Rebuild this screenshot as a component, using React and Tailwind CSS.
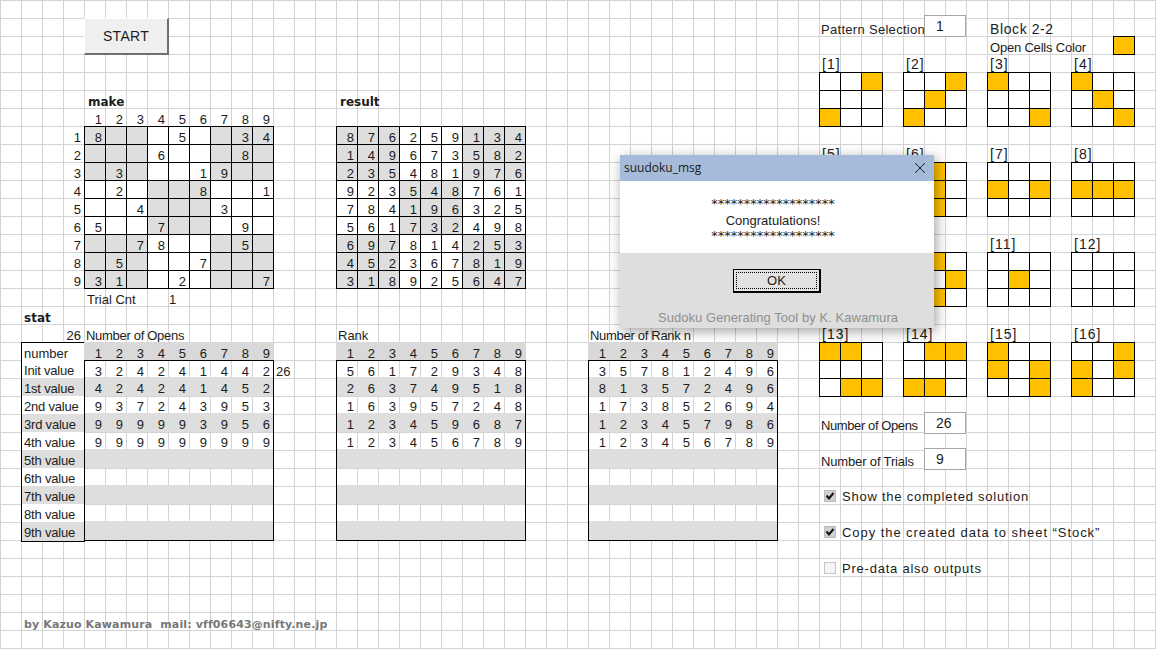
const ORANGE = 'bg-[#ffc000]';

const makeRows = [
  '8   5  34',
  '   6   8 ',
  ' 3   19  ',
  ' 2   8  1',
  '  4   3  ',
  '5  7   9 ',
  '  78   5 ',
  ' 5   7   ',
  '31  2   7',
];
const resultRows = ['876259134', '149673582', '235481976', '923548761', '784196325', '561732498', '697814253', '452367819', '318925647'];

const statLabels = ['Init value', '1st value', '2nd value', '3rd value', '4th value', '5th value', '6th value', '7th value', '8th value', '9th value'];
const statOpens = ['324241442', '424241452', '937243953', '999993956', '999999999'];
const statRank = ['561729348', '263749518', '163957248', '123459687', '123456789'];
const statCount = ['357812496', '813572496', '173852694', '123457986', '123456789'];

const patterns = [
  { n: 1, col: 'col-start-40', label: 'row-start-4', grid: 'row-start-5', on: [2, 6] },
  { n: 2, col: 'col-start-44', label: 'row-start-4', grid: 'row-start-5', on: [2, 4, 6] },
  { n: 3, col: 'col-start-48', label: 'row-start-4', grid: 'row-start-5', on: [0, 8] },
  { n: 4, col: 'col-start-52', label: 'row-start-4', grid: 'row-start-5', on: [0, 4, 8] },
  { n: 5, col: 'col-start-40', label: 'row-start-9', grid: 'row-start-10', on: [1, 7] },
  { n: 6, col: 'col-start-44', label: 'row-start-9', grid: 'row-start-10', on: [1, 4, 7] },
  { n: 7, col: 'col-start-48', label: 'row-start-9', grid: 'row-start-10', on: [3, 5] },
  { n: 8, col: 'col-start-52', label: 'row-start-9', grid: 'row-start-10', on: [3, 4, 5] },
  { n: 9, col: 'col-start-40', label: 'row-start-14', grid: 'row-start-15', on: [1, 3, 7] },
  { n: 10, col: 'col-start-44', label: 'row-start-14', grid: 'row-start-15', on: [1, 5, 7] },
  { n: 11, col: 'col-start-48', label: 'row-start-14', grid: 'row-start-15', on: [4] },
  { n: 12, col: 'col-start-52', label: 'row-start-14', grid: 'row-start-15', on: [] },
  { n: 13, col: 'col-start-40', label: 'row-start-19', grid: 'row-start-20', on: [0, 1, 7, 8] },
  { n: 14, col: 'col-start-44', label: 'row-start-19', grid: 'row-start-20', on: [1, 2, 6, 7] },
  { n: 15, col: 'col-start-48', label: 'row-start-19', grid: 'row-start-20', on: [0, 3, 5, 8] },
  { n: 16, col: 'col-start-52', label: 'row-start-19', grid: 'row-start-20', on: [2, 3, 5, 6] },
];

function isShaded(r, c) {
  const br = Math.floor(r / 3);
  const bc = Math.floor(c / 3);
  return (br + bc) % 2 === 0;
}

function Digit({ children }) {
  return <div className="w-[21px] h-[18px] shrink-0 pr-[3px] pt-[3px] text-right leading-[18px]">{children}</div>;
}

function Digits({ value }) {
  return (
    <div className="flex w-[189px]">
      {[...value].map((d, i) => <Digit key={i}>{d === ' ' ? '' : d}</Digit>)}
    </div>
  );
}

function SudokuBoard({ rows, className }) {
  return (
    <div className={`${className} w-fit h-fit grid grid-cols-[repeat(9,21px)] border-r border-b border-black`}>
      {rows.flatMap((row, r) => [...row].map((d, c) => (
        <div key={`${r}-${c}`} className={`h-[18px] pr-[3px] pt-[2px] text-right leading-[18px] border-l border-t border-black ${isShaded(r, c) ? 'bg-[#dedede]' : 'bg-white'}`}>
          {d === ' ' ? '' : d}
        </div>
      )))}
    </div>
  );
}

function StatBody({ rows, className = '' }) {
  return (
    <div className={`${className} w-fit h-fit`}>
      <div className="bg-[#d9d9d9] w-[189px]"><Digits value="123456789" /></div>
      <div className="w-[190px] h-[181px] border border-black">
        {statLabels.map((_, i) => (
          <div key={i} className={`${i === 0 ? 'h-[17px]' : 'h-[18px]'} ${i % 2 === 1 ? 'bg-[#dedede] shadow-[0_1px_0_#dedede]' : ''}`}>
            {rows[i] && <div className={`-ml-px ${i === 0 ? '-mt-px' : ''}`}><Digits value={rows[i]} /></div>}
          </div>
        ))}
      </div>
    </div>
  );
}

function MiniPattern({ on, className }) {
  return (
    <div className={`${className} w-fit h-fit grid grid-cols-[repeat(3,21px)] border-r border-b border-black`}>
      {Array.from({ length: 9 }, (_, i) => (
        <div key={i} className={`h-[18px] border-l border-t border-black ${on.includes(i) ? ORANGE : 'bg-white'}`} />
      ))}
    </div>
  );
}

function ValueBox({ value, className }) {
  return (
    <div className={`${className} w-[42px] h-[22px] pl-[11px] border border-[#a6a6a6] bg-white leading-[20px] text-[14px]`}>{value}</div>
  );
}

function CheckRow({ label, checked, className, trackClass }) {
  return (
    <div className={`${className} flex items-center gap-[6px] pl-[5px] h-[18px] w-[320px] pt-[4px] text-[13px] whitespace-nowrap ${trackClass}`}>
      <span className={`w-[12px] h-[12px] -mt-[2px] border shrink-0 flex items-center justify-center ${checked ? 'bg-[#d0d0d0] border-[#bbbbbb]' : 'bg-[#f4f4f4] border-[#c4c4c4]'}`}>
        {checked && (
          <svg width="10" height="10" viewBox="0 0 10 10" fill="none">
            <path d="M1.5 4.5 L4 7.5 L8.5 2" stroke="#111" strokeWidth="2" />
          </svg>
        )}
      </span>
      <span>{label}</span>
    </div>
  );
}

function MessageDialog() {
  return (
    <div className="absolute left-[620px] top-[155px] w-[314px] h-[173px] flex flex-col shadow-[2px_3px_12px_rgba(0,0,0,0.38)]">
      <div className="h-[26px] bg-[#a6bad9] flex items-center justify-between pl-[4px] pr-[8px] text-[12px] font-['Open_Sans',sans-serif] text-[#1a1a1a]">
        <span>suudoku_msg</span>
        <svg width="12" height="12" viewBox="0 0 12 12" stroke="#222" strokeWidth="1" fill="none">
          <path d="M1 1 L11 11 M11 1 L1 11" />
        </svg>
      </div>
      <div className="h-[72px] bg-white flex flex-col items-center pt-[15px] pr-[8px] text-[13px] leading-[15px]">
        <div className="font-['DejaVu_Sans',sans-serif] leading-[15px] h-[15px]">*******************</div>
        <div className="h-[15px] leading-[15px] mt-[2px]">Congratulations!</div>
        <div className="font-['DejaVu_Sans',sans-serif] leading-[15px] h-[15px]">*******************</div>
      </div>
      <div className="flex-1 bg-[#dedede] flex flex-col items-center pt-[16px]">
        <div className="w-[88px] h-[24px] border border-black border-r-2 border-b-2 bg-[#e2e2e2] p-[2px]">
          <div className="w-full h-full border border-dotted border-black flex items-center justify-center text-[13px]">OK</div>
        </div>
        <div className="mt-[15px] pl-[2px] text-[13px] tracking-[0.05px] text-[#8f8f8f] whitespace-nowrap">Sudoku Generating Tool by K. Kawamura</div>
      </div>
    </div>
  );
}

export default function App() {
  return (
    <div className="relative w-[1156px] h-[649px] overflow-hidden bg-white grid grid-cols-[repeat(56,21px)] grid-rows-[repeat(37,18px)] bg-[linear-gradient(to_right,#d4d4d4_1px,transparent_1px),linear-gradient(to_bottom,#d4d4d4_1px,transparent_1px)] bg-[size:21px_18px] font-['Liberation_Sans',sans-serif] text-[13px] text-[#1c1c1c]">
      {/* start button */}
      <div className="col-start-5 row-start-2 w-[85px] h-[37px] bg-[#efefef] border-t border-l border-white border-r-2 border-b-2 border-r-[#6f6f6f] border-b-[#6f6f6f] flex items-center justify-center text-[14px] tracking-[0.3px]">START</div>

      {/* make */}
      <div className="col-start-5 row-start-6 pl-[4px] pt-[3px] leading-[18px] font-['DejaVu_Sans',sans-serif] font-bold text-[12px] whitespace-nowrap">make</div>
      <div className="col-start-5 row-start-7"><Digits value="123456789" /></div>
      <div className="col-start-4 row-start-8 flex flex-col">
        {[1, 2, 3, 4, 5, 6, 7, 8, 9].map(n => <Digit key={n}>{n}</Digit>)}
      </div>
      <SudokuBoard rows={makeRows} className="col-start-5 row-start-8" />
      <div className="col-start-5 row-start-17 pl-[3px] pt-[3px] leading-[18px] whitespace-nowrap">Trial Cnt</div>
      <div className="col-start-9 row-start-17 pl-[1px] pt-[3px] leading-[18px]">1</div>

      {/* result */}
      <div className="col-start-17 row-start-6 pl-[4px] pt-[3px] leading-[18px] font-['DejaVu_Sans',sans-serif] font-bold text-[12px] whitespace-nowrap">result</div>
      <SudokuBoard rows={resultRows} className="col-start-17 row-start-8" />

      {/* stat */}
      <div className="col-start-2 row-start-18 pl-[3px] pt-[3px] leading-[18px] font-['DejaVu_Sans',sans-serif] font-bold text-[12px]">stat</div>
      <div className="col-start-4 row-start-19 pr-[3px] pt-[3px] text-right leading-[18px]">26</div>
      <div className="col-start-5 row-start-19 pl-[2px] pt-[3px] leading-[18px] tracking-[-0.3px] whitespace-nowrap">Number of Opens</div>
      <div className="col-start-2 row-start-20 w-[64px] h-[19px] border border-black bg-white pl-[2px] pt-[2px] leading-[18px]">number</div>
      <div className="col-start-2 row-start-21 w-[64px] h-[181px] border-l border-b border-r border-black mt-px">
        {statLabels.map((label, i) => (
          <div key={label} className={`h-[18px] pl-[2px] pt-[2px] leading-[18px] tracking-[-0.2px] whitespace-nowrap ${i === 0 ? '-mt-px' : ''} ${i % 2 === 1 ? 'bg-[#dedede] shadow-[0_1px_0_#dedede]' : 'bg-white'}`}>{label}</div>
        ))}
      </div>
      <StatBody rows={statOpens} className="col-start-5 row-start-20" />
      <div className="col-start-14 row-start-21 pl-[3px] pt-[3px] leading-[18px]">26</div>

      {/* rank */}
      <div className="col-start-17 row-start-19 pl-[2px] pt-[3px] leading-[18px]">Rank</div>
      <StatBody rows={statRank} className="col-start-17 row-start-20" />

      {/* number of rank n */}
      <div className="col-start-29 row-start-19 pl-[2px] pt-[3px] leading-[18px] tracking-[-0.3px] whitespace-nowrap">Number of Rank n</div>
      <StatBody rows={statCount} className="col-start-29 row-start-20" />

      {/* pattern panel */}
      <div className="col-start-40 row-start-2 pl-[2px] pt-[3px] leading-[18px] tracking-[0.3px] whitespace-nowrap">Pattern Selection</div>
      <ValueBox value="1" className="col-start-45 row-start-1 mt-[15px]" />
      <div className="col-start-48 row-start-2 pl-[3px] pt-[2px] leading-[18px] tracking-[0.6px] whitespace-nowrap text-[14px]">Block 2-2</div>
      <div className="col-start-48 row-start-3 pl-[3px] pt-[3px] leading-[18px] tracking-[-0.2px] whitespace-nowrap">Open Cells Color</div>
      <div className={`col-start-54 row-start-3 w-[22px] h-[19px] border border-black ${ORANGE}`} />

      {patterns.map(p => (
        <div key={`l${p.n}`} className={`${p.col} ${p.label} pl-[3px] pt-[1px] leading-[18px] tracking-[1px] text-[14px] whitespace-nowrap`}>[{p.n}]</div>
      ))}
      {patterns.map(p => <MiniPattern key={p.n} on={p.on} className={`${p.col} ${p.grid}`} />)}

      <div className="col-start-40 row-start-24 pl-[2px] pt-[3px] leading-[18px] tracking-[-0.4px] whitespace-nowrap">Number of Opens</div>
      <ValueBox value="26" className="col-start-45 row-start-23 mt-[16px]" />
      <div className="col-start-40 row-start-26 pl-[2px] pt-[3px] leading-[18px] tracking-[-0.15px] whitespace-nowrap">Number of Trials</div>
      <ValueBox value="9" className="col-start-45 row-start-25 mt-[16px]" />

      <CheckRow label="Show the completed solution" checked trackClass="tracking-[0.77px]" className="col-start-40 row-start-28" />
      <CheckRow label="Copy the created data to sheet “Stock”" checked trackClass="tracking-[0.94px]" className="col-start-40 row-start-30" />
      <CheckRow label="Pre-data also outputs" trackClass="tracking-[0.77px]" className="col-start-40 row-start-32" />

      <div className="col-start-2 row-start-35 pl-[3px] pt-[4px] leading-[18px] font-['DejaVu_Sans',sans-serif] font-bold text-[11px] tracking-[0.13px] text-[#777777] whitespace-pre">by Kazuo Kawamura  mail: vff06643@nifty.ne.jp</div>

      <MessageDialog />
    </div>
  );
}
